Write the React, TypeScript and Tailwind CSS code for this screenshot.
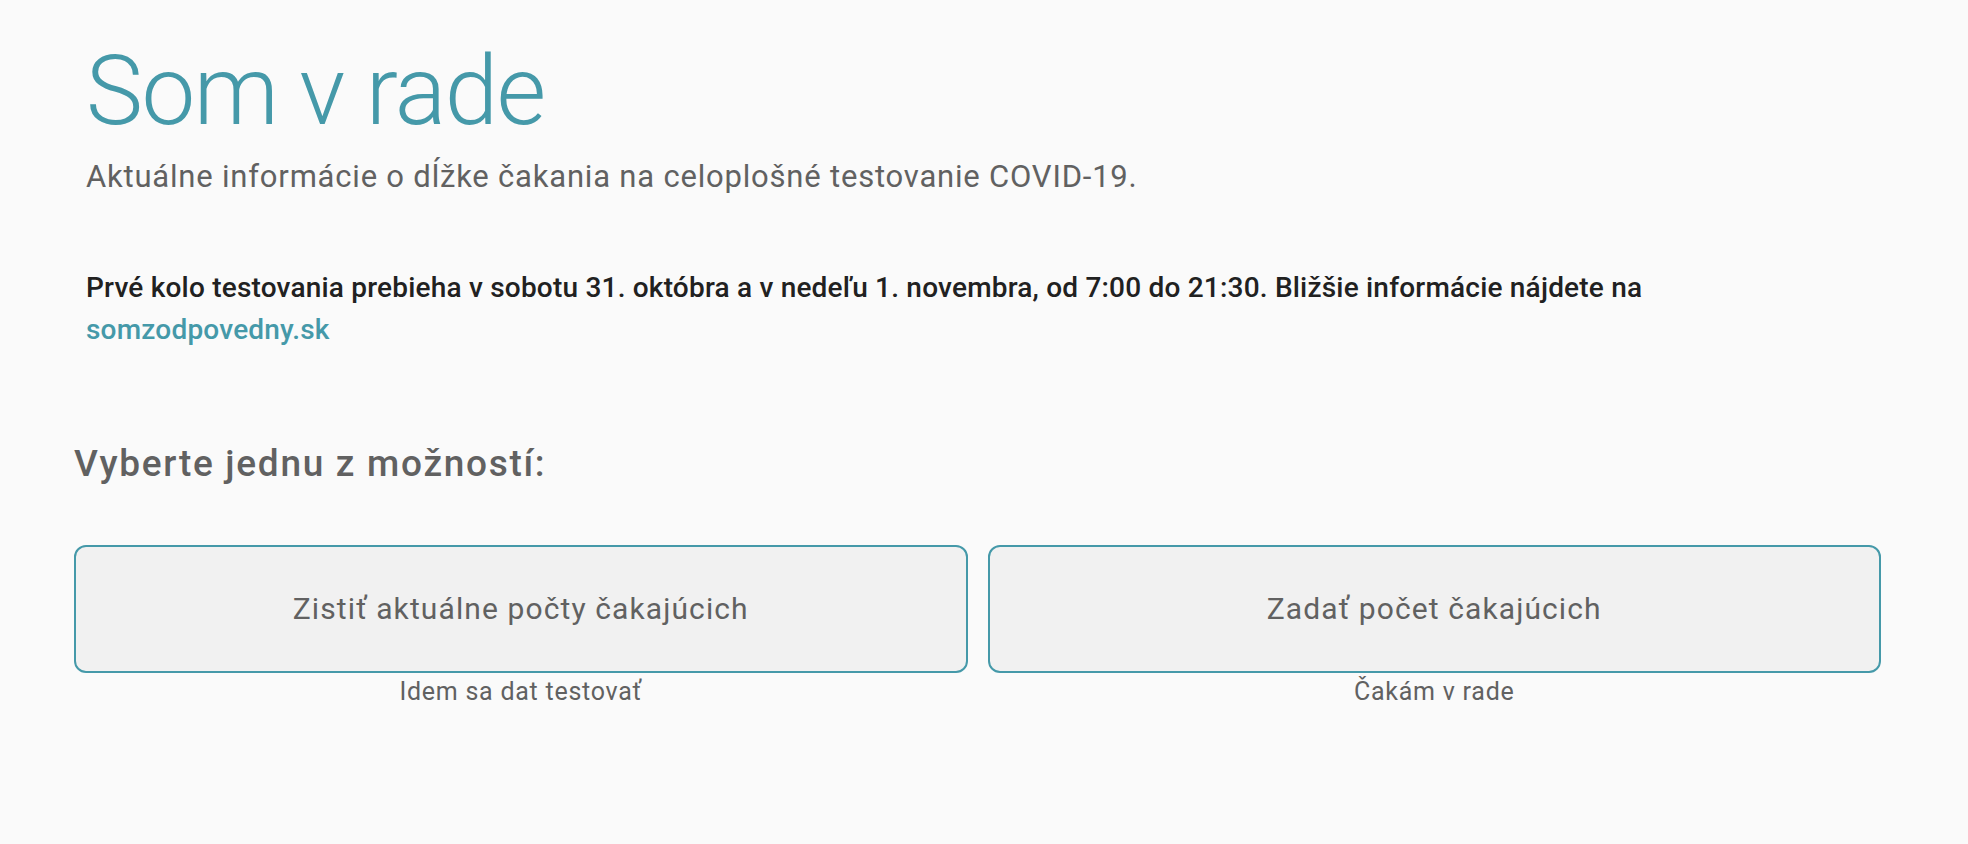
import React from 'react';

const options = [
  { label: 'Zistiť aktuálne počty čakajúcich', caption: 'Idem sa dat testovať' },
  { label: 'Zadať počet čakajúcich', caption: 'Čakám v rade' },
];

const App: React.FC = () => {
  return (
    <div className="min-h-[844px] bg-[#fafafa] pl-[74px] pr-[87px] font-['Roboto',sans-serif]">
      <div className="px-[12px]">
        <h1 className="pt-[43px] text-[96px] leading-[96px] font-light tracking-[-1.5px] text-[#4599a9]">Som v rade</h1>
        <p className="mt-[20px] text-[31px] leading-[36px] tracking-[0.8px] text-[#616161]">
          Aktuálne informácie o dĺžke čakania na celoplošné testovanie COVID-19.
        </p>
        <p className="mt-[72px] text-[28px] leading-[42px] font-medium tracking-[0.2px] text-[#212121]">
          Prvé kolo testovania prebieha v sobotu 31. októbra a v nedeľu 1. novembra, od 7:00 do 21:30. Bližšie
          informácie nájdete na <br />
          <a href="#" className="text-[#4599a9]">somzodpovedny.sk</a>
        </p>
      </div>
      <h2 className="mt-[91px] text-[37px] leading-[44px] font-medium tracking-[1.7px] text-[#616161]">
        Vyberte jednu z možností:
      </h2>
      <div className="mt-[59px] grid grid-cols-2 gap-[20px]">
        {options.map((o, i) => (
          <div key={i} className="flex flex-col items-center">
            <button className="flex h-[128px] w-full items-center justify-center rounded-[12px] border-2 border-[#4599a9] bg-[#f1f1f1] text-[30px] leading-[36px] tracking-[1.1px] text-[#616161]">
              {o.label}
            </button>
            <span className="mt-[4px] text-[25px] leading-[30px] tracking-[0.75px] text-[#616161]">{o.caption}</span>
          </div>
        ))}
      </div>
    </div>
  );
};

export default App;
